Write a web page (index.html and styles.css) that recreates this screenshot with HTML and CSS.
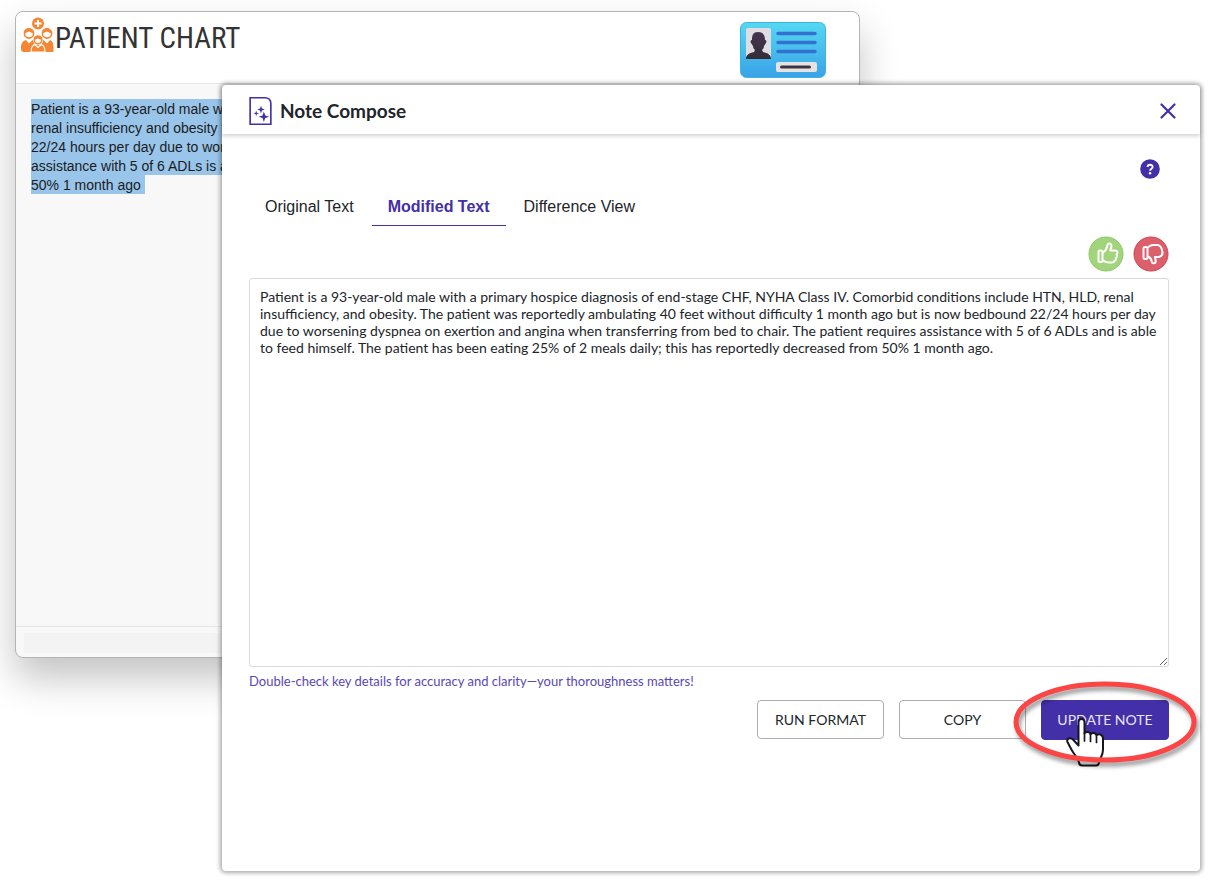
FILE: index.html
```html
<!DOCTYPE html>
<html lang="en">
<head>
<meta charset="utf-8">
<meta name="viewport" content="width=device-width, initial-scale=1">
<title>Note Compose</title>
<link rel="stylesheet" href="styles.css">
</head>
<body>
<main class="desktop">
  <section class="chart">
    <header class="chart-header">
      <svg class="chart-logo" viewBox="0 0 34 36" aria-hidden="true">
        <circle cx="18" cy="6.500" r="6" fill="#f58634"/>
        <path d="M18 3v7M14.500 6.500h7" stroke="#fff" stroke-width="2"/>
        <path d="M1 31.500c0-5 1-7 5-8.500l3 3.500 3.500-3.500h11l3.500 3.500 3-3.500c3 1.500 3.500 3.500 3.500 8.500v3.500H4c-2 0-3-1-3-3.500z" fill="#f58634"/>
        <g fill="#fff" stroke="#f58634" stroke-width="1.600">
          <circle cx="9" cy="16.500" r="4.600"/>
          <circle cx="27" cy="16.500" r="4.600"/>
        </g>
        <path d="M4 16c-.5-6.500 10-6.500 10 0-3 .5-4-1.500-5-1.500S6.500 16.500 4 16zM22 16c-.5-6.500 10-6.500 10 0-3 .5-4-1.500-5-1.500s-2.500 2-5 1.500z" fill="#f58634"/>
        <path d="M11 35c0-4 .5-6 3.500-7.500l3.500 3 3.500-3C24.500 29 25 31 25 35z" fill="#f58634" stroke="#fff" stroke-width="1.200"/>
        <circle cx="18" cy="23" r="5.200" fill="#fff"/>
        <circle cx="18" cy="23" r="3.800" fill="#fff" stroke="#f58634" stroke-width="1.500"/>
        <path d="M13.700 22.500c0-5.500 8.600-5.500 8.600 0-2.500.5-3.300-1-4.300-1s-1.800 1.500-4.300 1z" fill="#f58634"/>
      </svg>
      <h1 class="chart-title">PATIENT CHART</h1>
      <svg class="id-card" viewBox="0 0 86 56" aria-hidden="true">
        <defs>
          <linearGradient id="cardFill" x1="0" y1="0" x2="0" y2="1"><stop offset="0" stop-color="#55d8f2"/><stop offset="1" stop-color="#3aa2e8"/></linearGradient>
          <linearGradient id="inkFill" x1="0" y1="0" x2="0" y2="1"><stop offset="0" stop-color="#44354f"/><stop offset="1" stop-color="#352c38"/></linearGradient>
        </defs>
        <rect x=".5" y=".5" width="85" height="55" rx="6" fill="url(#cardFill)" stroke="#3db4df"/>
        <rect x="6" y="6" width="25" height="31" rx="2" fill="#dfdce2"/>
        <path d="M18 10c5 0 7 3 7 8 1 0 2 1 1 3l-2 3c0 2-1 3-2 4l1 2c5 1 8 3 8 7H6c0-4 3-6 8-7l1-2c-1-1-2-2-2-4l-2-3c-1-2 0-3 1-3 0-5 1-8 6-8z" fill="url(#inkFill)"/>
        <path d="M38 11.500h37M38 20.500h37M38 29.500h37" stroke="#3370cf" stroke-width="3.500" stroke-linecap="round"/>
        <rect x="36" y="40" width="41" height="10" rx="2" fill="#e4e2e3"/>
        <path d="M41.500 45h28" stroke="#3d3441" stroke-width="3" stroke-linecap="round"/>
      </svg>
    </header>
    <div class="chart-body">
      <p class="chart-note"><mark class="selection">Patient is a 93-year-old male with<br>renal insufficiency and obesity that<br>22/24 hours per day due to worsening<br>assistance with 5 of 6 ADLs is able<br>50% 1 month ago&nbsp;</mark></p>
    </div>
    <footer class="chart-footer"><div class="chart-bar"></div></footer>
  </section>

  <section class="dialog" role="dialog" aria-labelledby="dialog-title">
    <header class="dialog-header">
      <svg class="note-icon" viewBox="0 0 24 30" aria-hidden="true">
        <path d="M1.200 1.200h15.300q6.300 0 6.300 6.300v21.300H1.200z" fill="none" stroke="#432fa8" stroke-width="1.700"/>
        <g fill="#432fa8"><path d="M12.500 9.500l1 3 3 1-3 1-1 3-1-3-3-1 3-1zM7.500 14.500l.7 2.300 2.300.7-2.300.7-.7 2.300-.7-2.300-2.300-.7 2.300-.7zM15.500 15.500l1.400 4.100 4.100 1.400-4.100 1.400-1.400 4.100-1.400-4.100L10 21l4.100-1.400z"/></g>
      </svg>
      <h2 class="dialog-title" id="dialog-title">Note Compose</h2>
      <button class="icon-button close" type="button" aria-label="Close">
        <svg viewBox="0 0 16 16" aria-hidden="true"><path d="M1.500 1.500l13 13M14.500 1.500l-13 13" stroke="#432fa8" stroke-width="2.200" stroke-linecap="round"/></svg>
      </button>
    </header>
    <div class="dialog-body">
      <div class="help-row">
        <button class="icon-button help" type="button" aria-label="Help">
          <svg viewBox="0 0 20 20" aria-hidden="true"><circle cx="10" cy="10" r="9.800" fill="#432fa8"/><path d="M7.600 8.100c0-3.200 5-3 5-.2 0 1.800-2.500 1.800-2.500 3.800" fill="none" stroke="#fff" stroke-width="1.900"/><circle cx="10.100" cy="14.200" r="1.200" fill="#fff"/></svg>
        </button>
      </div>
      <div class="tabs" role="tablist">
        <button class="tab" type="button" role="tab">Original Text</button>
        <button class="tab active" type="button" role="tab" aria-selected="true">Modified Text</button>
        <button class="tab" type="button" role="tab">Difference View</button>
      </div>
      <div class="rating">
        <button class="icon-button rate" type="button" aria-label="Good result">
          <svg viewBox="0 0 36 36" aria-hidden="true"><circle cx="18" cy="18" r="17" fill="#a2d47c" stroke="#8bc964"/><g fill="none" stroke="#fff" stroke-width="2" stroke-linejoin="round"><rect x="10.500" y="14.500" width="4" height="11.500" rx="1.500"/><path d="M15 16.500c3-2 4-4.500 4.500-7.500.4-2.300 4-2 4 1 0 2-1 3-1.300 4.500H27c3 0 3 3 1.500 4 1 1.500.5 3-.6 3.500.2 1.500-.4 2.500-1.500 3-.2 1-1 1.500-2.400 1.500h-3.500c-2.500 0-4-1-6-2"/></g></svg>
        </button>
        <button class="icon-button rate" type="button" aria-label="Poor result">
          <svg viewBox="0 0 36 36" aria-hidden="true"><circle cx="18" cy="18" r="17" fill="#dc5f6c" stroke="#d63e4b"/><g fill="none" stroke="#fff" stroke-width="2" stroke-linejoin="round"><rect x="10.500" y="11" width="4" height="12" rx="1.500"/><path d="M15 20.500c3 1.500 3.500 2.500 3.700 5 .2 2.500 4 2.500 4-.5 0-2-.7-2.500-.8-4H26c3-1 4-3.500 3.200-6-.4-3-2-5.500-4.700-6h-4c-2.500 0-3.500 1-5.500 2"/></g></svg>
        </button>
      </div>
      <textarea class="note-text" aria-label="Modified text">Patient is a 93-year-old male with a primary hospice diagnosis of end-stage CHF, NYHA Class IV. Comorbid conditions include HTN, HLD, renal insufficiency, and obesity. The patient was reportedly ambulating 40 feet without difficulty 1 month ago but is now bedbound 22/24 hours per day due to worsening dyspnea on exertion and angina when transferring from bed to chair. The patient requires assistance with 5 of 6 ADLs and is able to feed himself. The patient has been eating 25% of 2 meals daily; this has reportedly decreased from 50% 1 month ago.</textarea>
      <p class="hint">Double-check key details for accuracy and clarity—your thoroughness matters!</p>
      <div class="actions">
        <button class="button" type="button">RUN FORMAT</button>
        <button class="button" type="button">COPY</button>
        <div class="highlighted">
          <button class="button primary" type="button">UPDATE NOTE</button>
          <svg class="callout" viewBox="0 0 196 96" aria-hidden="true">
            <path d="M71.500 46c0-4 6-4 6 0v11.500c1-2.500 6-2 6 1 1-2.500 5.500-2 6 1 2-2.500 6.500-1 6.500 3V74c0 5-3 8-4 12.500-.3 2.500-1 3-3 3H75c-2 0-2.700-1-3-3-1-4.500-4.500-7.500-7-12-2-3.500-3-5.500-4.500-8.500-1.500-3.500 3-5 5.500-2.500l5.500 6z" fill="#fff" stroke="#17161b" stroke-width="2" stroke-linejoin="round"/>
            <path d="M77.500 57v8M83.500 58.500v7M89.500 60.500v6" stroke="#17161b" stroke-width="1.700" stroke-linecap="round"/>
            <ellipse class="ring" cx="98" cy="46" rx="89" ry="38" fill="none" stroke="#fc4545" stroke-width="5"/>
          </svg>
        </div>
      </div>
    </div>
  </section>
</main>
</body>
</html>
```
FILE: styles.css
```css
* { box-sizing: border-box; }
body { margin: 0; background: #fff; color: #212529; font-family: Lato, sans-serif; }
h1, h2, p { margin: 0; font-weight: 400; }
button { font: inherit; color: inherit; cursor: pointer; }

.desktop { position: relative; min-height: 100vh; overflow: hidden; }

.chart {
  position: absolute; top: 11px; left: 15px; right: 348px; bottom: 227px;
  display: flex; flex-direction: column;
  background: #f8f8f8; border: 1px solid #b4b4b4; border-radius: 8px;
  box-shadow: 0 20px 38px rgba(0, 0, 0, .24);
}
.chart-header {
  display: flex; align-items: flex-start; height: 72px; flex: none;
  padding: 5px 33px 0 4px; background: #fff;
  border-bottom: 1px solid #e6e6e6; border-radius: 8px 8px 0 0;
}
.chart-logo { width: 34px; height: 36px; margin-right: 1px; flex: none; }
.chart-title {
  flex: 1; font-family: "Roboto Condensed", "Liberation Sans Narrow", Roboto, sans-serif;
  font-size: 29px; line-height: 42px; color: #333;
}
.id-card { width: 86px; height: 56px; margin-top: 5px; flex: none; }
.chart-body { flex: 1; padding: 16px 15px; }
.chart-note { font: 14px/19px "Liberation Sans", sans-serif; color: #1c1c1c; white-space: nowrap; }
.selection { background: #99c5eb; color: inherit; padding: 2px 0 1px; }
.chart-footer { padding: 6px 8px 4px; border-top: 1px solid #e6e6e6; }
.chart-bar { height: 20px; background: #f3f3f3; }

.dialog {
  position: absolute; top: 85px; left: 222px; right: 8px; bottom: 14px;
  display: flex; flex-direction: column;
  background: #fff; border-radius: 4px;
  box-shadow: 0 0 4px 2px rgba(0, 0, 0, .33);
}
.dialog-header {
  display: flex; align-items: center; gap: 8px; height: 49px; flex: none;
  padding: 2px 24px 0 27px; box-shadow: 0 2px 4px rgba(0, 0, 0, .18);
}
.note-icon { width: 23px; height: 30px; }
.dialog-title { flex: 1; font-size: 19px; line-height: 24px; font-weight: 700; }
.icon-button { display: block; padding: 0; border: 0; background: none; }
.icon-button svg { display: block; width: 100%; height: 100%; }
.close { width: 16px; height: 16px; }

.dialog-body { flex: 1; display: flex; flex-direction: column; min-height: 0; padding: 25px 31px 131px 27px; }
.help-row { display: flex; justify-content: flex-end; padding-right: 9px; }
.help { width: 20px; height: 20px; }
.tabs { display: flex; gap: 2px; margin-top: 8px; font: 16px/20px "Liberation Sans", sans-serif; }
.tab { padding: 10px 16px 8px; border: 0; border-bottom: 1px solid transparent; background: none; }
.tab.active { font-weight: 700; color: #432fa8; border-bottom-color: #432fa8; }
.rating { display: flex; justify-content: flex-end; gap: 9px; margin-top: 10px; }
.rate { width: 36px; height: 36px; }
.note-text {
  flex: 1; min-height: 120px; width: 100%; margin-top: 6px; padding: 9px 10px;
  border: 1px solid #d9d9d9; border-radius: 3px; background: #fff; color: #212529;
  font: 14px/17px Lato, sans-serif; resize: both;
}
.hint { margin-top: 5px; font-size: 13px; line-height: 18px; color: #5a48b5; }
.actions { display: flex; justify-content: flex-end; gap: 15px; margin-top: 10px; }
.button {
  width: 127px; height: 39px; padding: 0; border: 1px solid #adadad; border-radius: 4px;
  background: #fff; font-size: 14px; line-height: 20px; color: #212529;
}
.primary { display: block; width: 128px; height: 40px; border-color: #432fa8; background: #432fa8; color: #e9e6f6; }
.highlighted { position: relative; }
.callout { position: absolute; top: -24px; left: -34px; width: 196px; height: 96px; pointer-events: none; }
.ring { filter: drop-shadow(2px 4px 2px rgba(0, 0, 0, .4)); }
```
